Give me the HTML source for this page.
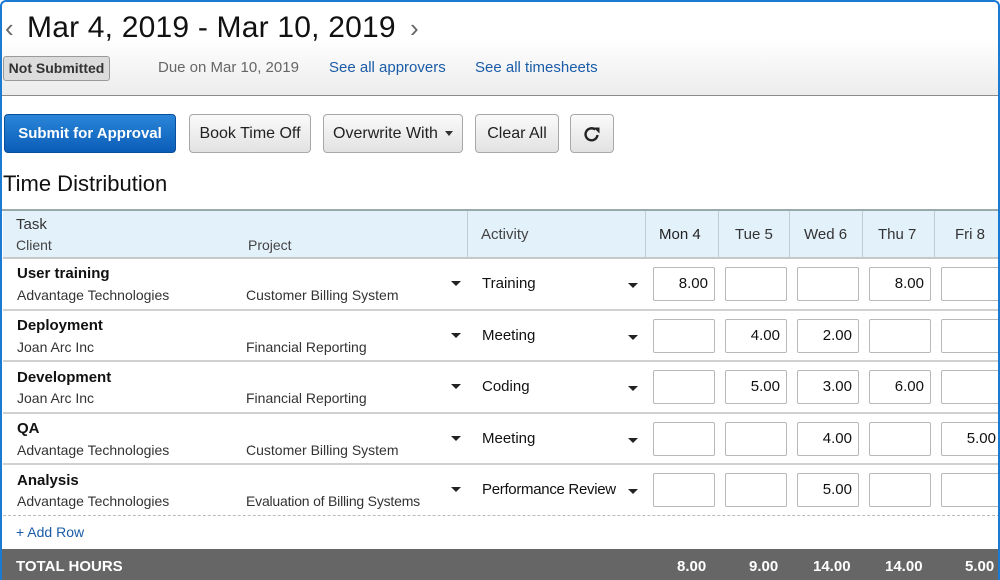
<!DOCTYPE html>
<html><head><meta charset="utf-8"><style>
*{box-sizing:border-box;margin:0;padding:0}
html,body{overflow:hidden}
body{width:1000px;height:580px;overflow:hidden;background:#fff;font-family:"Liberation Sans",Arial,sans-serif;color:#111;position:relative}
.a{position:absolute;white-space:nowrap}
#frame{position:absolute;left:0;top:0;width:1000px;height:580px;border:2px solid #1a7ad4;border-bottom:none;border-radius:6px 6px 0 0;pointer-events:none;z-index:9}
#hdr{position:absolute;left:0;top:0;width:1000px;height:96px;background:linear-gradient(#fff 0,#fff 40%,#ececec 100%);border-bottom:1px solid #8a8a8a}
.btn{position:absolute;top:114px;height:39px;border:1px solid #a8a8a8;border-radius:4px;background:linear-gradient(#fafafa,#e2e2e2);font-size:16px;color:#222;display:flex;align-items:center;justify-content:center}
.lnk{color:#1a5ca8;font-size:15px}
.th{position:absolute;top:211px;height:47px;background:#e3f1fb;border-right:1px solid #c2ccd4}
.cell{position:absolute;width:62px;height:34px;border:1px solid #b8b8b8;border-radius:2px;background:#fff;font-size:15px;text-align:right;padding-right:6px;line-height:32px}
.tri{position:absolute;width:0;height:0;border-left:5px solid transparent;border-right:5px solid transparent;border-top:5px solid #222}
.rl{position:absolute;left:3px;width:997px;height:2px;background:#d0d0d0}
.sm{font-size:14px;color:#333}
</style></head><body>
<div id="hdr"></div>
<div class="a" style="left:5px;top:13px;font-size:26px;color:#666">‹</div>
<div class="a" style="left:27px;top:11px;font-size:30px;color:#111;letter-spacing:0.2px">Mar 4, 2019 - Mar 10, 2019</div>
<div class="a" style="left:410px;top:13px;font-size:26px;color:#666">›</div>
<div class="a" style="left:3px;top:56px;width:107px;height:25px;border:1px solid #9a9a9a;border-radius:3px;background:#dcdcdc;font-size:14px;font-weight:bold;color:#333;text-align:center;line-height:23px">Not Submitted</div>
<div class="a" style="left:158px;top:59px;font-size:15px;color:#666">Due on Mar 10, 2019</div>
<div class="a lnk" style="left:329px;top:59px">See all approvers</div>
<div class="a lnk" style="left:475px;top:59px">See all timesheets</div>

<div class="btn" style="left:4px;width:172px;background:linear-gradient(#2a86d8,#0b5db8);border-color:#0a4f9e;color:#fff;font-weight:bold;font-size:15px">Submit for Approval</div>
<div class="btn" style="left:189px;width:122px">Book Time Off</div>
<div class="btn" style="left:323px;width:140px">Overwrite With <span style="display:inline-block;margin-left:7px;border-left:4px solid transparent;border-right:4px solid transparent;border-top:5px solid #333;vertical-align:middle"></span></div>
<div class="btn" style="left:475px;width:84px">Clear All</div>
<div class="btn" style="left:570px;width:44px"><svg width="22" height="22" viewBox="0 0 22 22"><path d="M16.5 12a6 6 0 1 1-2.2-5.4" fill="none" stroke="#222" stroke-width="2.4"/><path d="M12.5 4.5h6v6z" fill="#222"/></svg></div>

<div class="a" style="left:3px;top:171px;font-size:22px;color:#111">Time Distribution</div>

<div class="a" style="left:2px;top:209px;width:998px;height:2px;background:#9aa"></div>
<div class="th" style="left:3px;width:465px"></div>
<div class="th" style="left:468px;width:178px"></div>
<div class="th" style="left:646px;width:73px"></div>
<div class="th" style="left:719px;width:71px"></div>
<div class="th" style="left:790px;width:73px"></div>
<div class="th" style="left:863px;width:72px"></div>
<div class="th" style="left:935px;width:65px"></div>
<div class="a" style="left:16px;top:216px;font-size:15px;color:#333">Task</div>
<div class="a" style="left:16px;top:237px;font-size:14px;color:#444">Client</div>
<div class="a" style="left:248px;top:237px;font-size:14px;color:#444">Project</div>
<div class="a" style="left:481px;top:226px;font-size:15px;color:#444">Activity</div>
<div class="a" style="left:659px;top:226px;font-size:15px;color:#222">Mon 4</div>
<div class="a" style="left:735px;top:226px;font-size:15px;color:#333">Tue 5</div>
<div class="a" style="left:804px;top:226px;font-size:15px;color:#333">Wed 6</div>
<div class="a" style="left:878px;top:226px;font-size:15px;color:#333">Thu 7</div>
<div class="a" style="left:955px;top:226px;font-size:15px;color:#333">Fri 8</div>
<div class="rl" style="top:257px;background:#c8c8c8"></div>

<div class="a" style="left:17px;top:265px;font-size:15px;font-weight:bold">User training</div>
<div class="a sm" style="left:17px;top:287px">Advantage Technologies</div>
<div class="a sm" style="left:246px;top:287px">Customer Billing System</div>
<div class="tri" style="left:451px;top:281px"></div>
<div class="a" style="left:482px;top:275px;font-size:15px">Training</div>
<div class="tri" style="left:628px;top:283px"></div>
<div class="cell" style="left:653px;top:267px">8.00</div><div class="cell" style="left:725px;top:267px"></div><div class="cell" style="left:797px;top:267px"></div><div class="cell" style="left:869px;top:267px">8.00</div><div class="cell" style="left:941px;top:267px"></div>
<div class="rl" style="top:309px"></div>

<div class="a" style="left:17px;top:317px;font-size:15px;font-weight:bold">Deployment</div>
<div class="a sm" style="left:17px;top:339px">Joan Arc Inc</div>
<div class="a sm" style="left:246px;top:339px">Financial Reporting</div>
<div class="tri" style="left:451px;top:333px"></div>
<div class="a" style="left:482px;top:327px;font-size:15px">Meeting</div>
<div class="tri" style="left:628px;top:335px"></div>
<div class="cell" style="left:653px;top:319px"></div><div class="cell" style="left:725px;top:319px">4.00</div><div class="cell" style="left:797px;top:319px">2.00</div><div class="cell" style="left:869px;top:319px"></div><div class="cell" style="left:941px;top:319px"></div>
<div class="rl" style="top:360px"></div>

<div class="a" style="left:17px;top:369px;font-size:15px;font-weight:bold">Development</div>
<div class="a sm" style="left:17px;top:390px">Joan Arc Inc</div>
<div class="a sm" style="left:246px;top:390px">Financial Reporting</div>
<div class="tri" style="left:451px;top:384px"></div>
<div class="a" style="left:482px;top:378px;font-size:15px">Coding</div>
<div class="tri" style="left:628px;top:386px"></div>
<div class="cell" style="left:653px;top:370px"></div><div class="cell" style="left:725px;top:370px">5.00</div><div class="cell" style="left:797px;top:370px">3.00</div><div class="cell" style="left:869px;top:370px">6.00</div><div class="cell" style="left:941px;top:370px"></div>
<div class="rl" style="top:412px"></div>

<div class="a" style="left:17px;top:420px;font-size:15px;font-weight:bold">QA</div>
<div class="a sm" style="left:17px;top:442px">Advantage Technologies</div>
<div class="a sm" style="left:246px;top:442px">Customer Billing System</div>
<div class="tri" style="left:451px;top:436px"></div>
<div class="a" style="left:482px;top:430px;font-size:15px">Meeting</div>
<div class="tri" style="left:628px;top:438px"></div>
<div class="cell" style="left:653px;top:422px"></div><div class="cell" style="left:725px;top:422px"></div><div class="cell" style="left:797px;top:422px">4.00</div><div class="cell" style="left:869px;top:422px"></div><div class="cell" style="left:941px;top:422px">5.00</div>
<div class="rl" style="top:463px"></div>

<div class="a" style="left:17px;top:472px;font-size:15px;font-weight:bold">Analysis</div>
<div class="a sm" style="left:17px;top:493px">Advantage Technologies</div>
<div class="a sm" style="left:246px;top:493px;letter-spacing:-0.2px">Evaluation of Billing Systems</div>
<div class="tri" style="left:451px;top:487px"></div>
<div class="a" style="left:482px;top:481px;font-size:15px;letter-spacing:-0.3px">Performance Review</div>
<div class="tri" style="left:628px;top:489px"></div>
<div class="cell" style="left:653px;top:473px"></div><div class="cell" style="left:725px;top:473px"></div><div class="cell" style="left:797px;top:473px">5.00</div><div class="cell" style="left:869px;top:473px"></div><div class="cell" style="left:941px;top:473px"></div>
<div class="a" style="left:3px;top:515px;width:997px;border-top:1px dashed #bbb"></div>
<div class="a" style="left:16px;top:524px;font-size:14px;color:#1a5ca8">+ Add Row</div>

<div class="a" style="left:0;top:549px;width:1000px;height:31px;background:#666"></div>
<div class="a" style="left:16px;top:558px;font-size:15px;font-weight:bold;color:#fff">TOTAL HOURS</div>
<div class="a" style="left:677px;top:558px;font-size:15px;font-weight:bold;color:#fff">8.00</div>
<div class="a" style="left:749px;top:558px;font-size:15px;font-weight:bold;color:#fff">9.00</div>
<div class="a" style="left:813px;top:558px;font-size:15px;font-weight:bold;color:#fff">14.00</div>
<div class="a" style="left:885px;top:558px;font-size:15px;font-weight:bold;color:#fff">14.00</div>
<div class="a" style="left:965px;top:558px;font-size:15px;font-weight:bold;color:#fff">5.00</div>
<div id="frame"></div>
</body></html>
